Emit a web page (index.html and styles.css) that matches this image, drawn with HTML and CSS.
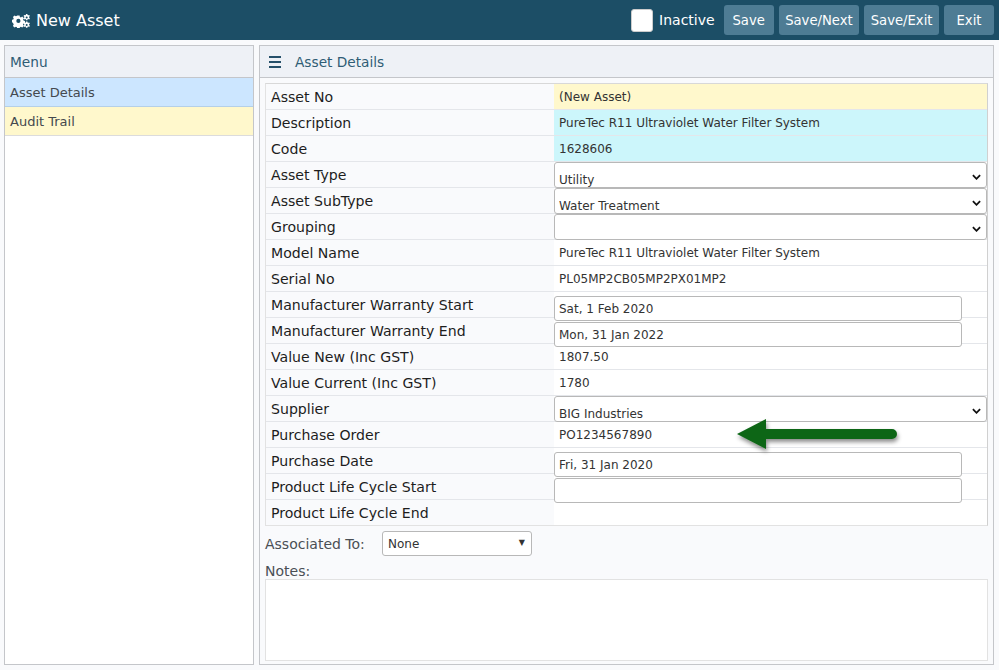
FILE: index.html
```html
<!DOCTYPE html>
<html lang="en">
<head>
    <meta charset="UTF-8">
    <title>New Asset</title>
    <link rel="stylesheet" href="styles.css">
</head>
<body>
    <header class="topbar">
        <div class="title">
            <svg class="gears" viewBox="0 0 18 14" width="18" height="14">
                <path fill="#fff" fill-rule="evenodd" d="M5.2 1.5h2.4l.3 1.5 1 .4 1.3-.8 1.700 1.700-.8 1.300.4 1 1.500.3v2.400l-1.500.3-.4 1-.1.1.9 1.200-1.700 1.700-1.300-.8-1 .4-.3 1.500H5.200l-.3-1.500-1-.4-1.300.8-1.700-1.700.8-1.300-.4-1L0 8.100V5.700l1.300-.3.4-1-.8-1.300 1.700-1.700 1.300.8 1-.4zM6.400 4.800a2.100 2.100 0 1 0 0 4.200 2.100 2.100 0 0 0 0-4.200z"/>
                <path fill="#fff" fill-rule="evenodd" d="M14 0h1.400l.2 1 .6.300 1-.4.700 1.200-.8.7v.7l.8.7-.7 1.200-1-.4-.6.3-.2 1H14l-.2-1-.6-.3-1 .4-.7-1.200.8-.7v-.7l-.8-.7.7-1.200 1 .4.6-.3zM14.700 2.500a1 1 0 1 0 0 2 1 1 0 0 0 0-2z"/>
                <path fill="#fff" fill-rule="evenodd" d="M14 7.500h1.400l.2 1 .6.300 1-.4.700 1.200-.8.7v.7l.8.7-.7 1.200-1-.4-.6.3-.2 1H14l-.2-1-.6-.3-1 .4-.7-1.200.8-.7v-.7l-.8-.7.7-1.200 1 .4.6-.3zM14.700 10a1 1 0 1 0 0 2 1 1 0 0 0 0-2z"/>
            </svg>
            <span>New Asset</span>
        </div>
        <div class="actions">
            <span class="check"></span>
            <span class="check-label">Inactive</span>
            <button class="btn">Save</button>
            <button class="btn">Save/Next</button>
            <button class="btn">Save/Exit</button>
            <button class="btn">Exit</button>
        </div>
    </header>

    <div class="main">
        <aside class="panel menu">
            <div class="panel-head">Menu</div>
            <div class="menu-item active">Asset Details</div>
            <div class="menu-item audit">Audit Trail</div>
        </aside>

        <section class="panel details">
            <div class="panel-head">
                <span class="burger"><i></i><i></i><i></i></span>
                <span>Asset Details</span>
            </div>
            <div class="details-body">
                <div class="form">
                    <div class="row"><label>Asset No</label><div class="value yellow">(New Asset)</div></div>
                    <div class="row"><label>Description</label><div class="value cyan">PureTec R11 Ultraviolet Water Filter System</div></div>
                    <div class="row"><label>Code</label><div class="value cyan">1628606</div></div>
                    <div class="row"><label>Asset Type</label><div class="value"><div class="select">Utility<svg class="chevron" viewBox="0 0 10 6"><path d="M1 1l4 4 4-4" fill="none" stroke="#111" stroke-width="2"/></svg></div></div></div>
                    <div class="row"><label>Asset SubType</label><div class="value"><div class="select">Water Treatment<svg class="chevron" viewBox="0 0 10 6"><path d="M1 1l4 4 4-4" fill="none" stroke="#111" stroke-width="2"/></svg></div></div></div>
                    <div class="row"><label>Grouping</label><div class="value"><div class="select"><svg class="chevron" viewBox="0 0 10 6"><path d="M1 1l4 4 4-4" fill="none" stroke="#111" stroke-width="2"/></svg></div></div></div>
                    <div class="row"><label>Model Name</label><div class="value">PureTec R11 Ultraviolet Water Filter System</div></div>
                    <div class="row"><label>Serial No</label><div class="value">PL05MP2CB05MP2PX01MP2</div></div>
                    <div class="row"><label>Manufacturer Warranty Start</label><div class="value"><div class="date">Sat, 1 Feb 2020</div></div></div>
                    <div class="row"><label>Manufacturer Warranty End</label><div class="value"><div class="date">Mon, 31 Jan 2022</div></div></div>
                    <div class="row"><label>Value New (Inc GST)</label><div class="value">1807.50</div></div>
                    <div class="row"><label>Value Current (Inc GST)</label><div class="value">1780</div></div>
                    <div class="row"><label>Supplier</label><div class="value"><div class="select">BIG Industries<svg class="chevron" viewBox="0 0 10 6"><path d="M1 1l4 4 4-4" fill="none" stroke="#111" stroke-width="2"/></svg></div></div></div>
                    <div class="row"><label>Purchase Order</label><div class="value po">PO1234567890
                        <svg class="arrow" viewBox="0 0 170 40" width="170" height="40">
                            <defs><filter id="soft" x="-10%" y="-30%" width="120%" height="170%"><feDropShadow dx="1" dy="3" stdDeviation="2" flood-color="#000" flood-opacity="0.45"/></filter></defs>
                            <path filter="url(#soft)" fill="#0f6616" d="M3 16 32 1V11H158a5 5 0 0 1 0 10H32V31z"/>
                        </svg>
                    </div></div>
                    <div class="row"><label>Purchase Date</label><div class="value"><div class="date">Fri, 31 Jan 2020</div></div></div>
                    <div class="row"><label>Product Life Cycle Start</label><div class="value"><div class="date"></div></div></div>
                    <div class="row"><label>Product Life Cycle End</label><div class="value empty"></div></div>
                </div>
                <div class="assoc">
                    <span class="assoc-label">Associated To:</span>
                    <div class="assoc-select">None<span class="caret">▼</span></div>
                </div>
                <div class="notes-label">Notes:</div>
                <div class="notes"></div>
            </div>
        </section>
    </div>
</body>
</html>
```

FILE: styles.css
```css
html, body {
    height: 100%;
}
body {
    margin: 0;
    height: 670px;
    overflow: hidden;
    background: #f9fafc;
    font-family: "DejaVu Sans", Verdana, sans-serif;
    color: #222;
    display: flex;
    flex-direction: column;
}
.topbar {
    height: 40px;
    flex: none;
    box-sizing: border-box;
    padding: 0 5px 0 12px;
    background: #1c4e66;
    color: #fff;
    display: flex;
    justify-content: space-between;
    align-items: center;
}
.title {
    display: flex;
    align-items: center;
    gap: 6px;
    font-size: 16px;
    padding-top: 1px;
}
.actions {
    display: flex;
    align-items: center;
    gap: 5px;
}
.check {
    width: 22px;
    height: 23px;
    box-sizing: border-box;
    background: #fff;
    border: 1px solid #ccc;
    border-radius: 3px;
    margin-right: 1px;
}
.check-label {
    font-size: 14px;
    margin: 0 4px 0 0;
}
.btn {
    min-width: 50px;
    height: 30px;
    padding: 0 6.500px;
    font-family: inherit;
    font-size: 13.200px;
    color: #fff;
    background: #4e7c94;
    border: none;
    border-radius: 3px;
}
.main {
    flex: 1;
    display: flex;
    gap: 5px;
    padding: 5px 5px 5px 4px;
    min-height: 0;
}
.panel {
    box-sizing: border-box;
    border: 1px solid #c4c6ca;
}
.menu {
    width: 250px;
    flex: none;
    background: #fff;
}
.details {
    flex: 1;
    min-width: 0;
    background: #f9fafc;
    display: flex;
    flex-direction: column;
}
.panel-head {
    height: 32px;
    box-sizing: border-box;
    padding: 0 5px;
    background: #eef1f6;
    border-bottom: 1px solid #c4c6ca;
    color: #2f5d75;
    font-size: 13.700px;
    display: flex;
    align-items: center;
}
.details .panel-head {
    padding-left: 9px;
    gap: 14px;
}
.burger {
    display: flex;
    flex-direction: column;
    gap: 3px;
    width: 12px;
}
.burger i {
    height: 2px;
    background: #26506a;
}
.menu-item {
    height: 29px;
    box-sizing: border-box;
    padding: 0 5px;
    display: flex;
    align-items: center;
    font-size: 13px;
    color: #44494f;
}
.menu-item.active {
    background: #cce6ff;
    border-bottom: 1px solid #b5d0e8;
}
.menu-item.audit {
    background: #fff8cc;
    border-bottom: 1px solid #dcdcdc;
}
.details-body {
    flex: 1;
    min-height: 0;
    padding: 5px 5px 3px;
    display: flex;
    flex-direction: column;
}
.form {
    border: 1px solid #e2e2e2;
    border-top-color: #d8d8d8;
    border-right-color: #d0d0d0;
    background: #fff;
}
.row {
    height: 26px;
    box-sizing: border-box;
    display: flex;
    border-bottom: 1px solid #e4e6ea;
}
.row:last-child {
    border-bottom: none;
    height: 25px;
}
.row label {
    width: 288px;
    flex: none;
    box-sizing: border-box;
    padding: 4px 0 0 5px;
    background: #f9fafc;
    font-size: 14.100px;
    color: #1d1d1d;
    line-height: 18px;
}
.value {
    flex: 1;
    min-width: 0;
    box-sizing: border-box;
    padding: 0 5px;
    background: #fff;
    font-size: 12px;
    line-height: 27px;
    color: #333;
    position: relative;
}
.value.yellow {
    background: #fff8cc;
}
.value.cyan {
    background: #ccf6fb;
}
.select {
    height: 26px;
    margin: 0 0 0 -5px;
    width: 433px;
    box-sizing: border-box;
    padding: 4px 0 0 4px;
    background: #fff;
    border: 1px solid #b8b8b8;
    border-radius: 3px;
    display: flex;
    justify-content: space-between;
    line-height: 26px;
    position: relative;
    z-index: 1;
}
.chevron {
    width: 9px;
    height: 6px;
    margin: 7px 5px 0 auto;
}
.date {
    height: 25px;
    margin: 4px 0 0 -5px;
    width: 408px;
    box-sizing: border-box;
    padding: 0 4px;
    background: #fff;
    border: 1px solid #b8b8b8;
    border-radius: 3px;
    line-height: 25px;
    position: relative;
    z-index: 1;
}
.arrow {
    position: absolute;
    left: 180px;
    top: -4px;
    z-index: 2;
}
.assoc {
    display: flex;
    align-items: center;
    margin-top: 5px;
    height: 25px;
    font-size: 14px;
    color: #4a4f55;
}
.assoc-label {
    width: 117px;
}
.assoc-select {
    width: 150px;
    height: 25px;
    box-sizing: border-box;
    padding: 0 6px 0 5px;
    background: #fff;
    border: 1px solid #b8b8b8;
    border-radius: 3px;
    font-size: 12px;
    line-height: 24px;
    color: #333;
    display: flex;
    justify-content: space-between;
}
.caret {
    font-size: 8px;
    line-height: 22px;
}
.notes-label {
    margin-top: 7px;
    height: 16px;
    font-size: 14px;
    line-height: 17px;
    color: #4a4f55;
}
.notes {
    flex: 1;
    background: #fff;
    border: 1px solid #e2e2e2;
}
```
